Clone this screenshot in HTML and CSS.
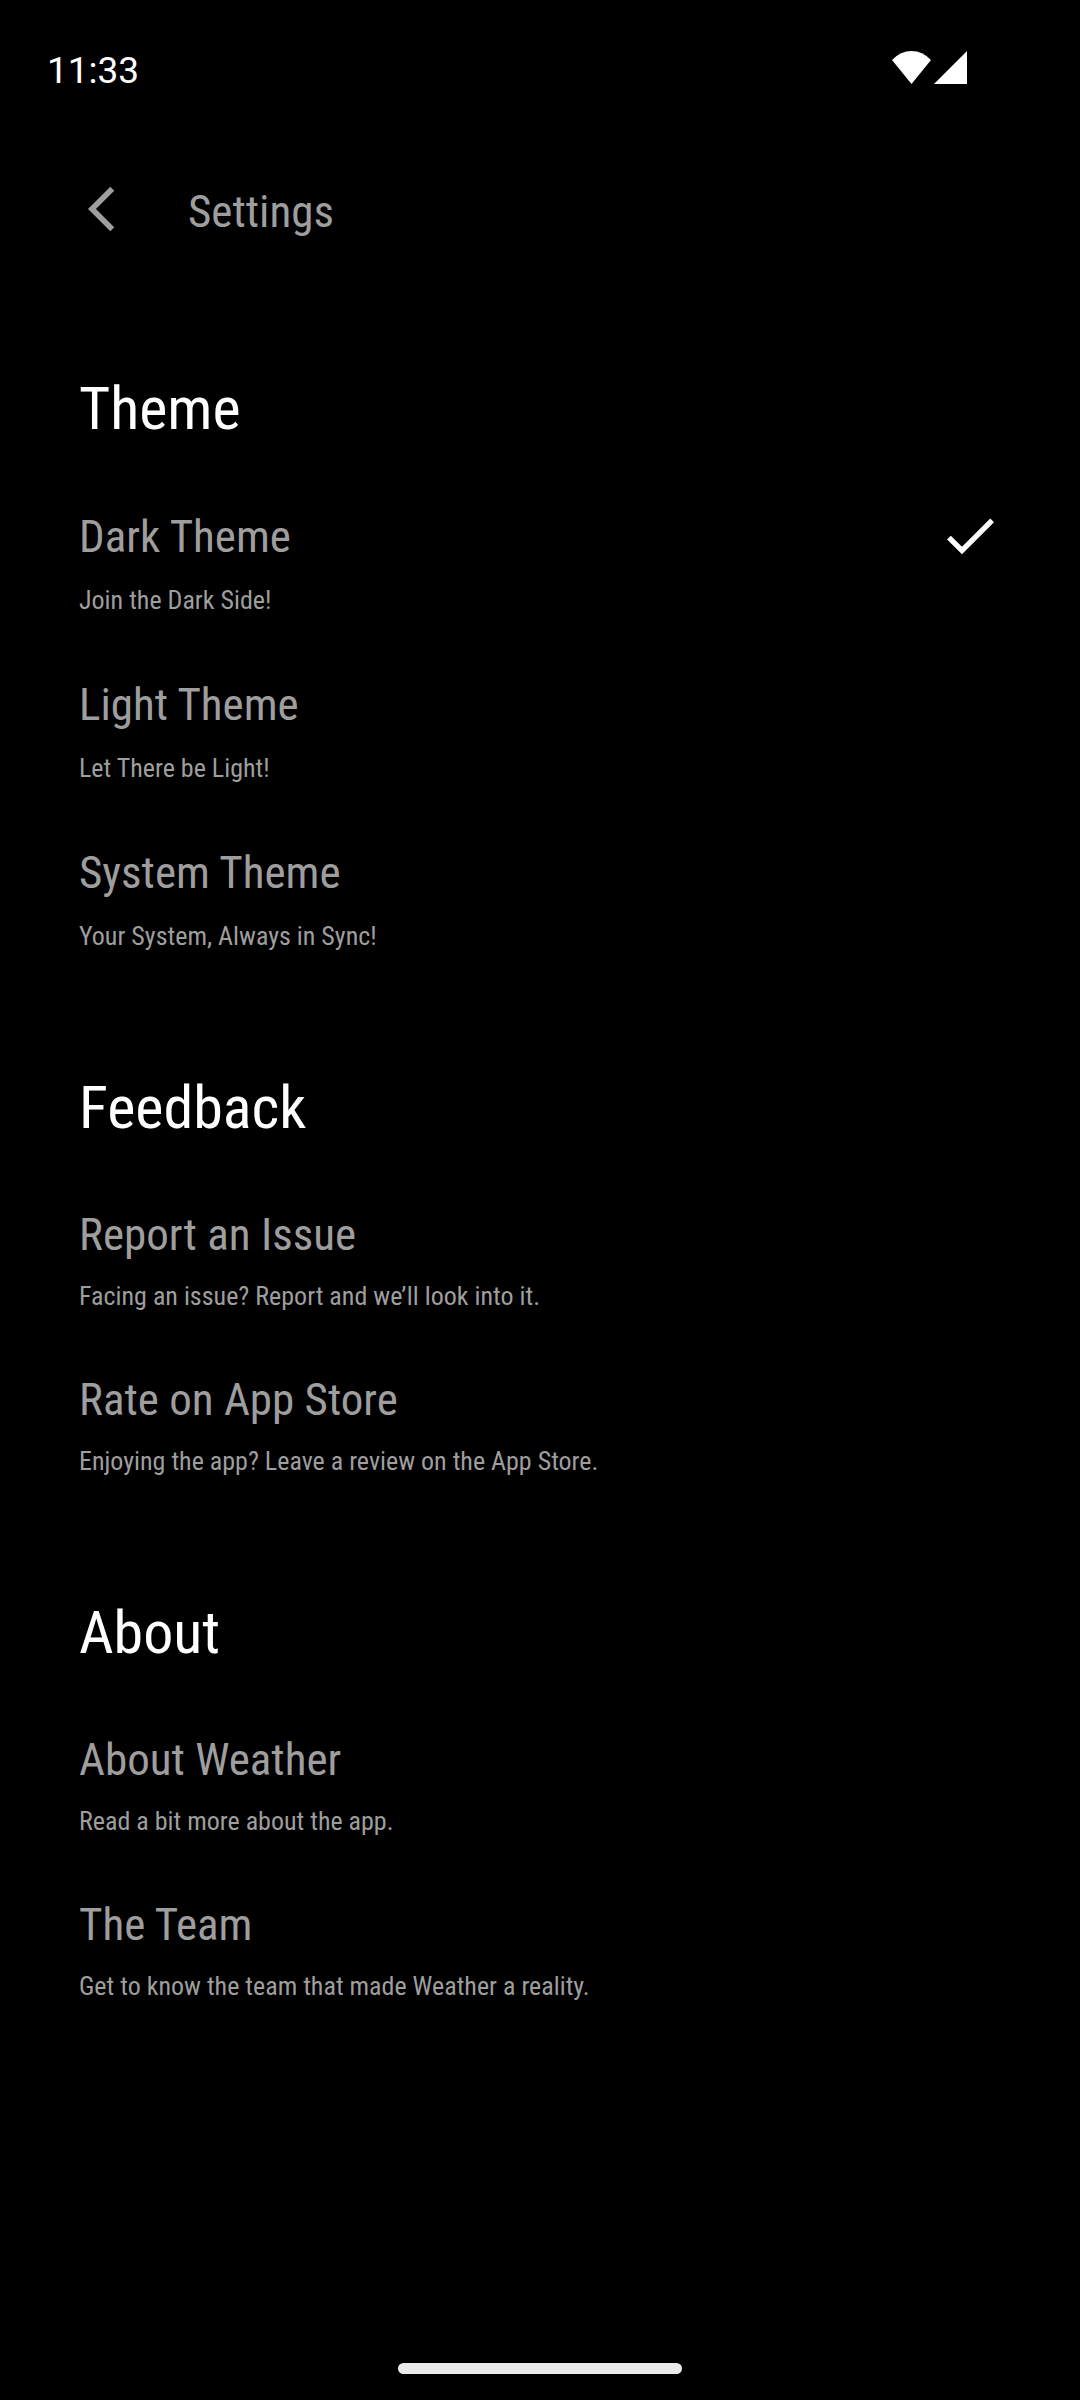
FILE: index.html
```html
<!DOCTYPE html>
<html lang="en">
<head>
<meta charset="utf-8">
<meta name="viewport" content="width=device-width, initial-scale=1">
<title>Settings</title>
<link rel="stylesheet" href="styles.css">
</head>
<body>
<div class="status-bar">
  <span class="clock">11:33</span>
  <div class="status-icons">
    <svg class="wifi" viewBox="0 0 39 33" aria-hidden="true"><path d="M19.500 33L0 9Q8.500 0 19.500 0T39 9z"/></svg>
    <svg class="signal" viewBox="0 0 33 33" aria-hidden="true"><path d="M0 33L33 0V33z"/></svg>
  </div>
</div>
<header class="app-bar">
  <button class="back" type="button" aria-label="Back">
    <svg viewBox="0 0 24 24" aria-hidden="true"><path d="M11.670 3.870L9.900 2.100 0 12l9.900 9.900 1.770-1.770L3.540 12z"/></svg>
  </button>
  <h1 class="page-title">Settings</h1>
</header>
<main class="settings">
  <section class="group group-theme">
    <h2 class="group-title">Theme</h2>
    <div class="options">
      <label class="option">
        <span class="option-text">
          <span class="option-title">Dark Theme</span>
          <span class="option-note">Join the Dark Side!</span>
        </span>
        <input class="choice" type="radio" name="theme" value="dark" checked>
        <svg class="check" viewBox="0 2 24 21" aria-hidden="true"><path d="M9 16.200L4.800 12l-1.400 1.400L9 19 21 7l-1.400-1.400L9 16.200z"/></svg>
      </label>
      <label class="option">
        <span class="option-text">
          <span class="option-title">Light Theme</span>
          <span class="option-note">Let There be Light!</span>
        </span>
        <input class="choice" type="radio" name="theme" value="light">
        <svg class="check" viewBox="0 2 24 21" aria-hidden="true"><path d="M9 16.200L4.800 12l-1.400 1.400L9 19 21 7l-1.400-1.400L9 16.200z"/></svg>
      </label>
      <label class="option">
        <span class="option-text">
          <span class="option-title">System Theme</span>
          <span class="option-note">Your System, Always in Sync!</span>
        </span>
        <input class="choice" type="radio" name="theme" value="system">
        <svg class="check" viewBox="0 2 24 21" aria-hidden="true"><path d="M9 16.200L4.800 12l-1.400 1.400L9 19 21 7l-1.400-1.400L9 16.200z"/></svg>
      </label>
    </div>
  </section>
  <section class="group">
    <h2 class="group-title">Feedback</h2>
    <div class="options">
      <a class="option" href="#report">
        <span class="option-text">
          <span class="option-title">Report an Issue</span>
          <span class="option-note">Facing an issue? Report and we’ll look into it.</span>
        </span>
      </a>
      <a class="option" href="#rate">
        <span class="option-text">
          <span class="option-title">Rate on App Store</span>
          <span class="option-note">Enjoying the app? Leave a review on the App Store.</span>
        </span>
      </a>
    </div>
  </section>
  <section class="group">
    <h2 class="group-title">About</h2>
    <div class="options">
      <a class="option" href="#about">
        <span class="option-text">
          <span class="option-title">About Weather</span>
          <span class="option-note">Read a bit more about the app.</span>
        </span>
      </a>
      <a class="option" href="#team">
        <span class="option-text">
          <span class="option-title">The Team</span>
          <span class="option-note">Get to know the team that made Weather a reality.</span>
        </span>
      </a>
    </div>
  </section>
</main>
<footer class="nav-bar"><div class="nav-handle"></div></footer>
</body>
</html>
```
FILE: styles.css
```css
* { box-sizing: border-box; }

body {
  margin: 0;
  min-height: 100vh;
  display: flex;
  flex-direction: column;
  background: #000;
  color: #9e9e9e;
  font-family: "Ubuntu Condensed", "Roboto Condensed", "Liberation Sans Narrow", "Open Sans Condensed", "DejaVu Sans Condensed", sans-serif;
}

svg { display: block; fill: currentColor; }

.status-bar {
  display: flex;
  justify-content: space-between;
  align-items: flex-start;
  padding: 47px 113px 0 47px;
  color: #fff;
}

.clock {
  font-family: Roboto, sans-serif;
  font-size: 37px;
  line-height: 48px;
}

.status-icons { display: flex; gap: 3px; padding-top: 4px; }
.wifi { width: 39px; height: 33px; }
.signal { width: 33px; height: 33px; }

.app-bar {
  display: flex;
  align-items: flex-start;
  gap: 46px;
  padding: 87px 78px 0 88px;
}

.back {
  padding: 0;
  border: 0;
  background: none;
  color: inherit;
}
.back svg { width: 54px; height: 54px; }

.page-title {
  margin: 0;
  font-size: 45px;
  font-weight: 400;
  line-height: 60px;
}

.settings {
  flex: 1;
  display: flex;
  flex-direction: column;
  gap: 120px;
  padding: 131px 78px 118px 79px;
}

.group-title {
  margin: 0 0 63px;
  color: #fff;
  font-size: 60px;
  font-weight: 400;
  line-height: 72px;
}

.options {
  display: flex;
  flex-direction: column;
  gap: 60px;
}

.option {
  display: flex;
  align-items: flex-start;
  justify-content: space-between;
  color: inherit;
  text-decoration: none;
}

.option-text {
  display: flex;
  flex-direction: column;
  gap: 17px;
}

.option-title { font-size: 45px; line-height: 56px; }
.option-note { font-size: 26px; line-height: 32px; }

.group-theme .group-title { margin-bottom: 64px; }
.group-theme .options { gap: 61px; }
.group-theme .option-text { gap: 19px; }

.choice {
  appearance: none;
  width: 0;
  height: 0;
  margin: 0 0 0 auto;
}

.check {
  width: 64px;
  height: 56px;
  color: #fff;
  visibility: hidden;
}
.choice:checked + .check { visibility: visible; }

.nav-bar {
  display: flex;
  justify-content: center;
  padding-bottom: 26px;
}

.nav-handle {
  width: 284px;
  height: 11px;
  border-radius: 6px;
  background: #ebebeb;
}
```
